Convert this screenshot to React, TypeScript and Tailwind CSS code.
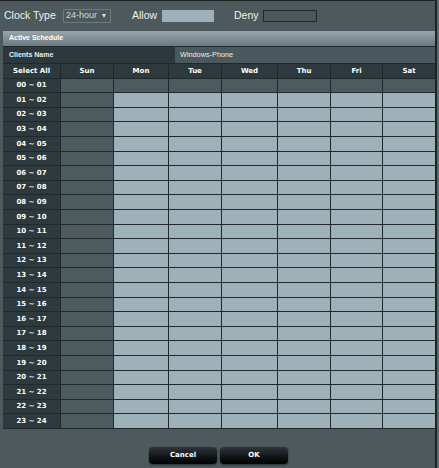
import React from 'react';

const days = ['Sun', 'Mon', 'Tue', 'Wed', 'Thu', 'Fri', 'Sat'];

const pad = (n: number) => (n < 10 ? `0${n}` : `${n}`);

const hours = Array.from({ length: 24 }, (_, i) => `${pad(i)} ~ ${pad(i + 1)}`);

// Sunday and the first hour are denied, everything else allowed
const isAllowed = (hour: number, day: number) => day !== 0 && hour !== 0;

export default function App() {
    return (
        <div className="w-[439px] h-[468px] bg-[#5e6a6e] overflow-hidden">
            <div className="w-[437px] h-[468px] bg-[#4d595d] border-t border-r-2 border-[#1c2427] flex flex-col">
                {/* clock type / legend */}
                <div className="h-[30px] flex items-center pl-[4px] text-[10.5px] text-[#f0f0f0] font-['Liberation_Sans',Arial,sans-serif]">
                    <span className="w-[59px]">Clock Type</span>
                    <div className="w-[48px] h-[14px] bg-[#4b585c] border border-[#6d7a7e] flex items-center justify-between pl-[2px] pr-[4px] text-[9px] text-[#d4dcde]">
                        <span>24-hour</span>
                        <span className="w-0 h-0 border-l-[2.5px] border-r-[2.5px] border-t-[4px] border-l-transparent border-r-transparent border-t-[#e0e0e0]" />
                    </div>
                    <span className="ml-[21px] w-[30px]">Allow</span>
                    <div className="w-[52px] h-[12px] bg-[#9fb1b8]" />
                    <span className="ml-[20px] w-[29px]">Deny</span>
                    <div className="w-[54px] h-[12px] bg-[#4a575b] border border-[#1f292c]" />
                </div>

                {/* schedule table */}
                <div className="ml-[3px] w-[432px] bg-[#1f282b] flex flex-col gap-px pb-px">
                    <div className="h-[15px] bg-gradient-to-b from-[#98a6ab] to-[#6b7a7f] flex items-center pl-[6px] text-[7px] font-bold text-white font-['Liberation_Sans',Arial,sans-serif]">
                        Active Schedule
                    </div>
                    <div className="h-[16px] flex text-[7px] font-['Liberation_Sans',Arial,sans-serif]">
                        <div className="w-[172px] bg-[#2c383c] flex items-center pl-[6px] font-bold text-[#e8ecec]">Clients Name</div>
                        <div className="flex-1 bg-[#4a595e] flex items-center pl-[5px] text-[7.3px] text-[#e8ecec]">Windows-Phone</div>
                    </div>
                    <div className="h-[364px] grid grid-cols-[57px_52px_54px_52px_55px_52px_51px_52px] grid-rows-[repeat(25,minmax(0,1fr))] gap-px text-[7px] font-bold text-white font-['DejaVu_Sans',Verdana,sans-serif]">
                        <div className="bg-[#2d393d] flex items-center justify-center">Select All</div>
                        {days.map((d) => (
                            <div key={d} className="bg-[#2d393d] flex items-center justify-center">{d}</div>
                        ))}
                        {hours.map((label, h) => (
                            <React.Fragment key={label}>
                                <div className="bg-[#2d393d] flex items-center justify-center">{label}</div>
                                {days.map((d, i) => (
                                    <div key={d} className={isAllowed(h, i) ? 'bg-[#9fb1b8]' : 'bg-[#4d5a5e]'} />
                                ))}
                            </React.Fragment>
                        ))}
                    </div>
                </div>

                {/* actions */}
                <div className="mt-[18px] pl-[2px] flex justify-center gap-[3px] font-['DejaVu_Sans',Verdana,sans-serif] text-[7px] font-bold text-white">
                    <button className="w-[68px] h-[17px] rounded-[4px] bg-gradient-to-b from-[#2e373b] to-[#020303] shadow-[0_1px_2px_rgba(0,0,0,0.5)]">Cancel</button>
                    <button className="w-[68px] h-[17px] rounded-[4px] bg-gradient-to-b from-[#2e373b] to-[#020303] shadow-[0_1px_2px_rgba(0,0,0,0.5)]">OK</button>
                </div>
            </div>
        </div>
    );
}
